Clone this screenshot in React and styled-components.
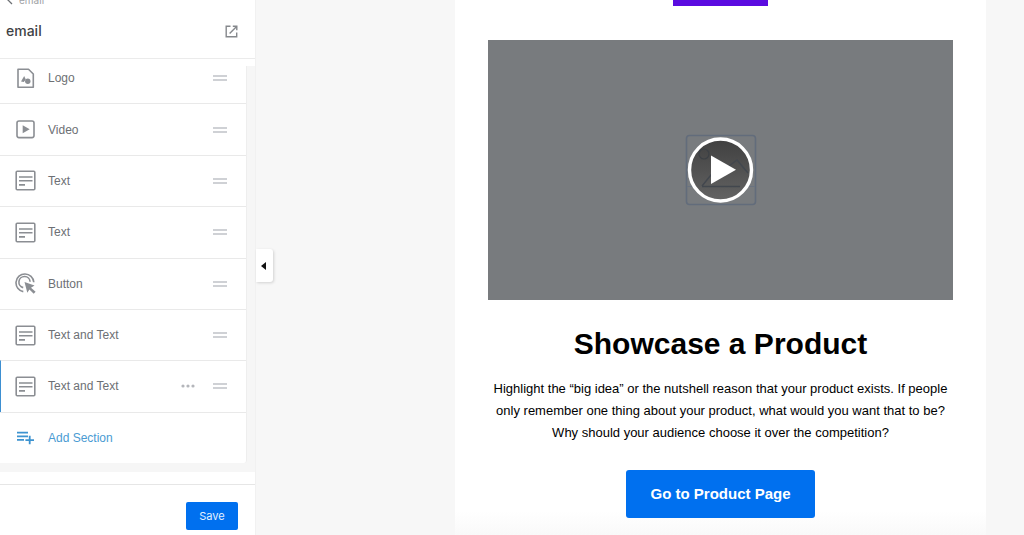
import React from "react";
import styled, { createGlobalStyle } from "styled-components";

const GlobalStyle = createGlobalStyle`
  * {
    box-sizing: border-box;
  }
  body {
    margin: 0;
    background: #f7f7f7;
    font-family: Inter, "Liberation Sans", sans-serif;
  }
  h1, h2, p, ul {
    margin: 0;
    padding: 0;
  }
  button {
    padding: 0;
    border: 0;
    background: none;
    font-family: inherit;
    cursor: pointer;
  }
  svg {
    display: block;
  }
`;

const Layout = styled.div`
  display: flex;
  height: 100vh;
  overflow: hidden;
`;

const Sidebar = styled.aside`
  display: flex;
  flex-direction: column;
  flex: 0 0 256px;
  background: #fff;
  border-right: 1px solid #f1f1f1;
`;

const SidebarHeader = styled.header`
  display: flex;
  flex-direction: column;
  justify-content: flex-end;
  height: 59px;
  overflow: hidden;
  border-bottom: 1px solid #ebebeb;
`;

const Crumb = styled.a`
  display: flex;
  flex: none;
  align-items: center;
  gap: 6px;
  height: 12px;
  padding-left: 7px;
  font-size: 10px;
  line-height: 12px;
  color: #a0a2a5;
  text-decoration: none;
`;

const TitleRow = styled.div`
  display: flex;
  flex: none;
  align-items: center;
  justify-content: space-between;
  height: 52px;
  padding: 0 17px 2px 6px;
`;

const Title = styled.h1`
  font-size: 14px;
  font-weight: 500;
  line-height: 20px;
  color: #3f4245;
`;

const IconButton = styled.button`
  display: flex;
  color: #85888c;
`;

const Scroller = styled.div`
  display: flex;
  flex: 1;
  flex-direction: column;
  justify-content: flex-end;
  min-height: 0;
  margin-top: 7px;
  padding: 0 8px 9px 0;
  overflow: hidden;
  background: #f6f6f6;
`;

const SectionList = styled.ul`
  display: grid;
  flex: none;
  grid-auto-rows: 1fr;
  height: 411px;
  list-style: none;
  background: #fff;
  border-right: 1px solid #eeeeee;
  border-radius: 0 0 3px 0;
`;

const Section = styled.li`
  display: flex;
  align-items: center;
  padding: 0 19px 0 ${props => (props.$selected ? 14 : 15)}px;
  border-left: ${props => (props.$selected ? "1px solid #3d8fd1" : "0")};
  border-top: 1px solid #e9e9e9;
`;

const SectionLink = styled.button`
  display: flex;
  flex: 1;
  align-items: center;
  gap: 12px;
  font-family: "Liberation Sans", Arial, sans-serif;
  font-size: 12px;
  line-height: 16px;
  text-align: left;
  color: ${props => (props.$accent ? "#4a9bd3" : "#6d7074")};
  svg {
    color: ${props => (props.$accent ? "#3d93d0" : "#8b8e93")};
  }
`;

const RowTools = styled.div`
  display: flex;
  align-items: center;
  gap: 18px;
`;

const SidebarFooter = styled.footer`
  display: flex;
  align-items: center;
  justify-content: flex-end;
  height: 51px;
  margin-top: 12px;
  padding: 12px 17px 0 0;
  border-top: 1px solid #e6e6e6;
`;

const SaveButton = styled.button`
  width: 52px;
  height: 28px;
  border-radius: 2px;
  background: #0070ef;
  font-size: 11px;
  color: #e4f0ff;
`;

const Preview = styled.main`
  position: relative;
  flex: 1;
  min-width: 0;
  padding: 0 38px 0 199px;
`;

const CollapseTab = styled.button`
  position: absolute;
  top: 249px;
  left: 0;
  display: flex;
  align-items: center;
  justify-content: center;
  width: 17px;
  height: 33px;
  padding-right: 2px;
  border-radius: 0 3px 3px 0;
  background: #fff;
  box-shadow: 1px 1px 3px rgba(0, 0, 0, 0.15);
`;

const Email = styled.article`
  display: flex;
  flex-direction: column;
  align-items: center;
  min-height: 100%;
  padding: 0 33px;
  background: linear-gradient(to top, #f9f9f9, #fff 24px);
  font-family: "Liberation Sans", Arial, sans-serif;
  text-align: center;
  color: #000;
`;

const BrandBlock = styled.div`
  width: 95px;
  height: 6px;
  margin-bottom: 34px;
  background: #5a0be0;
`;

const Video = styled.div`
  display: flex;
  align-items: center;
  justify-content: center;
  width: 100%;
  height: 260px;
  background: #787b7e;
`;

const Headline = styled.h2`
  margin-top: 25px;
  font-size: 30px;
  line-height: 38px;
  white-space: nowrap;
`;

const Copy = styled.p`
  margin-top: 15px;
  font-size: 13px;
  line-height: 22px;
  white-space: nowrap;
`;

const CallToAction = styled.a`
  margin-top: 26px;
  padding: 0 24px;
  border-radius: 3px;
  background: #0070ef;
  font-size: 15px;
  font-weight: bold;
  line-height: 48px;
  color: #fff;
  text-decoration: none;
`;

const Icon = ({ children, size = 21 }) => (
  <svg
    width={size}
    height={size}
    viewBox={`0 0 ${size} ${size}`}
    fill="none"
    stroke="currentColor"
    strokeWidth="1.6"
    aria-hidden="true"
  >
    {children}
  </svg>
);

const LogoIcon = () => (
  <Icon>
    <path d="M3 1.2h10.5L18.3 6v13.3H3z" strokeLinejoin="round" />
    <path d="M6 13.5l3.2-5.5 1.6 3.5-2 2.5z" fill="currentColor" stroke="none" />
    <circle cx="12.8" cy="13.3" r="2.7" fill="currentColor" stroke="none" />
  </Icon>
);

const VideoIcon = () => (
  <Icon>
    <rect x="2" y="2" width="17" height="16.6" rx="2" />
    <path d="M7.7 6.3v8l7-4z" fill="currentColor" stroke="none" />
  </Icon>
);

const TextIcon = () => (
  <Icon>
    <rect x="1.2" y="1.2" width="18.6" height="18.6" rx="1" />
    <path d="M4 7h13.5M4 10.7h13.5M4 14.9h6" />
  </Icon>
);

const ButtonIcon = () => (
  <Icon>
    <path d="M8.3 18.6A8.9 8.9 0 1 1 18.8 9.2" />
    <path d="M8.2 14.6A5.6 5.6 0 1 1 15.1 8.8" />
    <path
      d="M9.5 8.9l10 3.7-3.5 2.2 4.6 4-1.9 2-4.3-4.4-2.1 3.4z"
      fill="currentColor"
      stroke="none"
    />
  </Icon>
);

const AddIcon = () => (
  <Icon>
    <path
      d="M2 5.7h11M2 9.3h11M2 12.9h7M14.7 8.8v8.5M10.4 13.1h8.6"
      strokeWidth="1.8"
    />
  </Icon>
);

const HandleIcon = () => (
  <svg width="14" height="8" viewBox="0 0 14 8" fill="none" aria-hidden="true">
    <path d="M0 2h14M0 6h14" stroke="#c0c2c7" strokeWidth="1.5" />
  </svg>
);

const MoreIcon = () => (
  <svg width="14" height="4" viewBox="0 0 14 4" fill="#b4b6bb" aria-hidden="true">
    <circle cx="2" cy="2" r="1.6" />
    <circle cx="7" cy="2" r="1.6" />
    <circle cx="12" cy="2" r="1.6" />
  </svg>
);

const ExternalIcon = () => (
  <Icon size={13}>
    <path
      d="M5.5 1.3H1.2v10.5h10.5V7.5M7.8 1.2h4v4M11.6 1.4L4.6 8.4"
      strokeWidth="1.4"
    />
  </Icon>
);

const PlayBadge = () => (
  <svg width="72" height="72" viewBox="0 0 72 72" fill="none" aria-hidden="true">
    <defs>
      <linearGradient id="disc" x1="0" y1="0" x2="0" y2="1">
        <stop offset="0" stopColor="#404040" />
        <stop offset="1" stopColor="#636363" />
      </linearGradient>
    </defs>
    <rect x="1.5" y="1.5" width="69" height="69" rx="3" stroke="#626c7b" strokeWidth="1.6" />
    <path d="M2 52.5h68" stroke="#6a7380" />
    <circle cx="35.5" cy="36" r="31" fill="url(#disc)" />
    <circle cx="19" cy="20" r="5" stroke="#3c4045" strokeWidth="1.2" />
    <path d="M17 52L30 36M44 32l8-6 11 13M17 52.5h38" stroke="#42474e" strokeWidth="1.4" />
    <circle cx="35.5" cy="36" r="31" stroke="#fff" strokeWidth="3.4" />
    <path d="M26 21.5v28.5l25-14.2z" fill="#fff" />
  </svg>
);

const sections = [
  { label: "Logo", icon: LogoIcon },
  { label: "Video", icon: VideoIcon },
  { label: "Text", icon: TextIcon },
  { label: "Text", icon: TextIcon },
  { label: "Button", icon: ButtonIcon },
  { label: "Text and Text", icon: TextIcon },
  { label: "Text and Text", icon: TextIcon, selected: true }
];

const SectionRow = ({ label, icon: SectionIcon, selected }) => (
  <Section $selected={selected}>
    <SectionLink type="button">
      <SectionIcon />
      {label}
    </SectionLink>
    <RowTools>
      {selected && (
        <IconButton type="button" aria-label="More options">
          <MoreIcon />
        </IconButton>
      )}
      <IconButton type="button" aria-label={`Move ${label}`}>
        <HandleIcon />
      </IconButton>
    </RowTools>
  </Section>
);

const App = () => (
  <React.Fragment>
    <GlobalStyle />
    <Layout>
      <Sidebar>
        <SidebarHeader>
          <Crumb href="#">
            <svg width="6" height="10" viewBox="0 0 6 10" fill="none" aria-hidden="true">
              <path d="M5 1L1 5l4 4" stroke="#6d7074" strokeWidth="1.3" />
            </svg>
            email
          </Crumb>
          <TitleRow>
            <Title>email</Title>
            <IconButton type="button" aria-label="Open preview">
              <ExternalIcon />
            </IconButton>
          </TitleRow>
        </SidebarHeader>
        <Scroller>
          <SectionList>
            {sections.map((section, i) => (
              <SectionRow key={i} {...section} />
            ))}
            <Section>
              <SectionLink type="button" $accent>
                <AddIcon />
                Add Section
              </SectionLink>
            </Section>
          </SectionList>
        </Scroller>
        <SidebarFooter>
          <SaveButton type="button">Save</SaveButton>
        </SidebarFooter>
      </Sidebar>
      <Preview>
        <CollapseTab type="button" aria-label="Collapse sidebar">
          <svg width="5" height="8" viewBox="0 0 5 8" aria-hidden="true">
            <path d="M5 0v8L0 4z" fill="#111" />
          </svg>
        </CollapseTab>
        <Email>
          <BrandBlock />
          <Video>
            <IconButton type="button" aria-label="Play video">
              <PlayBadge />
            </IconButton>
          </Video>
          <Headline>Showcase a Product</Headline>
          <Copy>
            Highlight the “big idea” or the nutshell reason that your product exists. If people
            <br />
            only remember one thing about your product, what would you want that to be?
            <br />
            Why should your audience choose it over the competition?
          </Copy>
          <CallToAction href="#">Go to Product Page</CallToAction>
        </Email>
      </Preview>
    </Layout>
  </React.Fragment>
);

export default App;
